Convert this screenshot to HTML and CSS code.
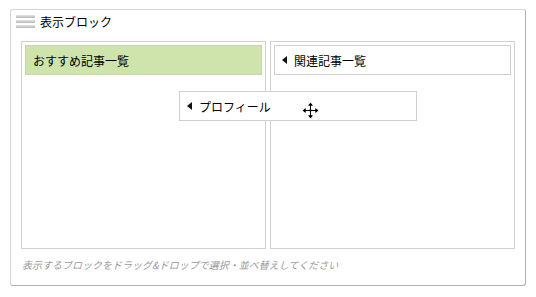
FILE: index.html
```html
<!DOCTYPE html>
<html lang="ja">
  <head>
    <meta charset="UTF-8" />
    <link rel="stylesheet" href="styles.css">
    <title>表示ブロック</title>
  </head>
  <body>
    <div class="panel">
      <div class="panel-head">
        <span class="handle"><i></i><i></i><i></i></span>
        <span class="title">表示ブロック</span>
      </div>

      <div class="columns">
        <div class="col">
          <div class="block active">おすすめ記事一覧</div>
        </div>
        <div class="col">
          <div class="block"><span class="arrow"></span>関連記事一覧</div>
        </div>
      </div>

      <p class="hint">表示するブロックをドラッグ&amp;ドロップで選択・並べ替えしてください</p>

      <!-- item being dragged -->
      <div class="block dragging"><span class="arrow"></span>プロフィール</div>
      <svg class="cursor" width="19" height="19" viewBox="0 0 19 19">
        <path d="M9.5 1 L13 5 H10.5 V8.5 H14 V6 L18 9.5 L14 13 V10.5 H10.5 V14 H13 L9.5 18 L6 14 H8.5 V10.5 H5 V13 L1 9.5 L5 6 V8.5 H8.5 V5 H6 Z" fill="#000" stroke="#fff" stroke-width="1"/>
      </svg>
    </div>
  </body>
</html>
```

FILE: styles.css
```css
* {
  box-sizing: border-box;
}

body {
  margin: 0;
  background-color: #fff;
  font-family: "Noto Sans CJK JP", "DejaVu Sans", sans-serif;
  color: #000;
}

.panel {
  position: relative;
  margin: 9px 0 0 10px;
  width: 516px;
  height: 277px;
  border: 1px solid #d4d4d4;
  border-right-color: #b0b0b0;
  border-bottom-color: #b0b0b0;
  border-radius: 3px;
  padding: 0 10px 0 10px;
}

.panel-head {
  display: flex;
  align-items: center;
  height: 23px;
  margin: 0 0 8px -5px;
}

.handle {
  display: flex;
  flex-direction: column;
  gap: 2px;
  width: 19px;
  margin-right: 5px;
}

.handle i {
  display: block;
  height: 3px;
  background: linear-gradient(#e4e4e4, #b8b8b8);
}

.title {
  font-size: 12px;
  line-height: 14px;
}

.columns {
  display: flex;
  gap: 4px;
  height: 208px;
}

.col {
  flex: 1;
  border: 1px solid #d0d0d0;
  padding: 3px;
}

.block {
  display: flex;
  align-items: center;
  height: 30px;
  border: 1px solid #cfcfcf;
  background-color: #fff;
  padding-left: 7px;
  font-size: 12px;
}

.block.active {
  background-color: #cfe4ad;
  border-color: #c6d7aa;
}

.arrow {
  width: 0;
  height: 0;
  border-top: 4px solid transparent;
  border-bottom: 4px solid transparent;
  border-right: 5px solid #111;
  margin-right: 7px;
}

.hint {
  margin: 8px 0 0 1px;
  font-size: 10px;
  font-style: italic;
  color: #9a9a9a;
}

.dragging {
  position: absolute;
  left: 168px;
  top: 81px;
  width: 238px;
}

.cursor {
  position: absolute;
  left: 290px;
  top: 91px;
}
```
